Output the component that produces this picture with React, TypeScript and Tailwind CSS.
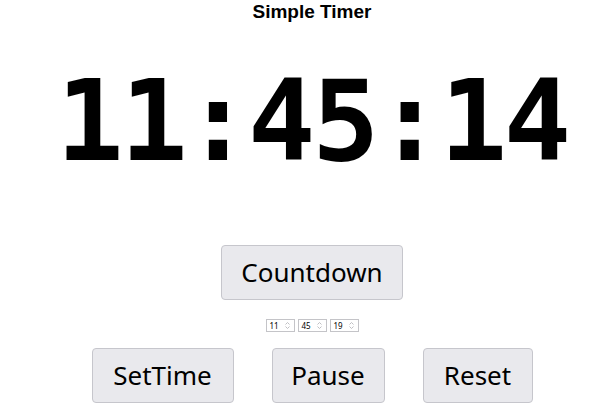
import React from "react";

function Spin() {
  return (
    <svg width="7" height="9" viewBox="0 0 7 9" className="shrink-0">
      <path d="M1.5 3.5 L3.5 1.5 L5.5 3.5" fill="none" stroke="#b8b8bc" strokeWidth="0.9" />
      <path d="M1.5 5.5 L3.5 7.5 L5.5 5.5" fill="none" stroke="#b8b8bc" strokeWidth="0.9" />
    </svg>
  );
}

function NumBox({ value }: { value: string }) {
  return (
    <div className="flex h-[13px] w-[29px] items-center justify-between border border-[#c4c4c8] bg-white pl-[3px] pr-[3px] text-[8px] leading-none text-black">
      <span>{value}</span>
      <Spin />
    </div>
  );
}

function Btn({ label, w }: { label: string; w: string }) {
  return (
    <button
      className={`flex h-[55px] ${w} items-center justify-center rounded-[4px] border border-[#c6c6cc] bg-[#e9e9ed] text-[26px] text-black`}
    >
      {label}
    </button>
  );
}

export default function App() {
  return (
    <div className="flex h-[409px] w-[614px] flex-col items-center overflow-hidden bg-white pl-[10px] font-['Noto_Sans',sans-serif]">
      <h1 className="mt-[1px] font-['Liberation_Sans',Arial,sans-serif] text-[19px] font-bold leading-[22px] text-black">
        Simple Timer
      </h1>

      <div className="mt-[33px] h-[130px] font-['DejaVu_Sans_Mono',monospace] text-[112px] font-bold leading-[130px] tracking-[-3.5px] text-black">
        11:45:14
      </div>

      <div className="mt-[59px]">
        <Btn label="Countdown" w="w-[182px]" />
      </div>

      <div className="mt-[19px] flex gap-[3px]">
        <NumBox value="11" />
        <NumBox value="45" />
        <NumBox value="19" />
      </div>

      <div className="mt-[16px] flex gap-[38px]">
        <Btn label="SetTime" w="w-[142px]" />
        <Btn label="Pause" w="w-[113px]" />
        <Btn label="Reset" w="w-[110px]" />
      </div>
    </div>
  );
}
